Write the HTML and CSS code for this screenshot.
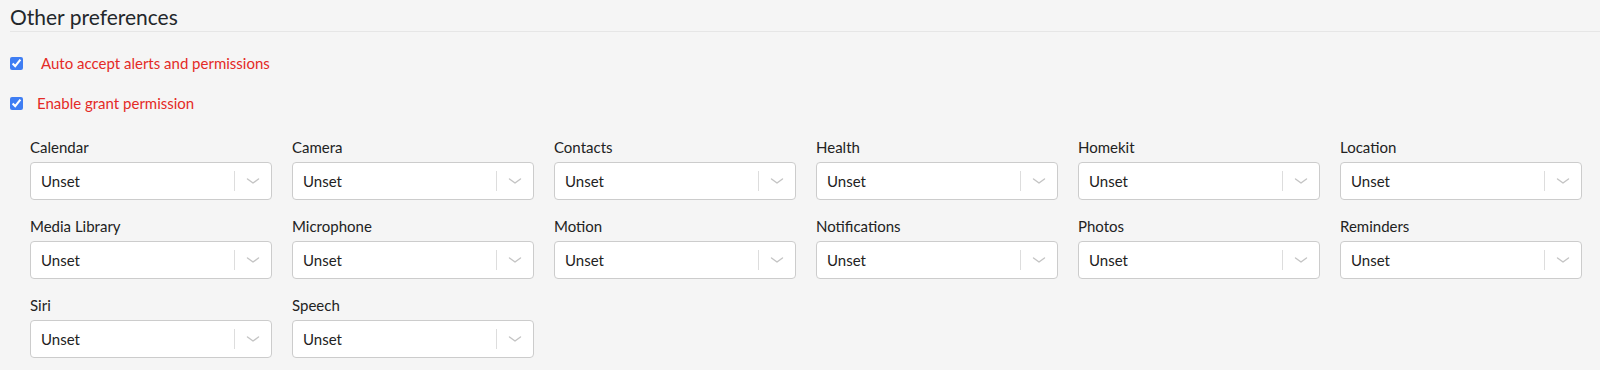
FILE: index.html
```html
<!DOCTYPE html>
<html>
<head>
    <title>Other preferences</title>
    <link rel="stylesheet" href="styles.css">
</head>
<body>
    <div class="container">
        <h2 class="section-title">Other preferences</h2>

        <div class="check-row">
            <input type="checkbox" id="autoAccept" checked>
            <label for="autoAccept" class="check-label check-label-wide">Auto accept alerts and permissions</label>
        </div>
        <div class="check-row">
            <input type="checkbox" id="grantPermission" checked>
            <label for="grantPermission" class="check-label">Enable grant permission</label>
        </div>

        <div id="permissions" class="permissions-grid"></div>
    </div>

    <script>
        const permissions = [
            'Calendar', 'Camera', 'Contacts', 'Health', 'Homekit', 'Location',
            'Media Library', 'Microphone', 'Motion', 'Notifications', 'Photos', 'Reminders',
            'Siri', 'Speech'
        ];

        document.getElementById('permissions').innerHTML = permissions.map(name => `
            <div class="field">
                <div class="field-label">${name}</div>
                <div class="select">
                    <div class="select-value">Unset</div>
                    <span class="select-separator"></span>
                    <div class="select-indicator">
                        <svg width="20" height="20" viewBox="0 0 20 20">
                            <polyline points="4.5,8 10,12 15.5,8" fill="none" stroke="#c4c4c4" stroke-width="1.4" stroke-linecap="round" stroke-linejoin="round"/>
                        </svg>
                    </div>
                </div>
            </div>
        `).join('');
    </script>
</body>
</html>
```

FILE: styles.css
```css
body {
    font-family: 'Lato', 'Open Sans', sans-serif;
    margin: 0;
    padding: 0;
    background-color: #f5f5f5;
    color: #333;
}
.container {
    padding-left: 10px;
}
.section-title {
    font-size: 21px;
    font-weight: 400;
    line-height: 24px;
    margin: 0;
    padding: 5px 0 2px;
    color: #23272b;
    border-bottom: 1px solid #e6e6e6;
}
.check-row {
    display: flex;
    align-items: center;
    height: 20px;
    margin-top: 20px;
}
.check-row:first-of-type {
    margin-top: 21px;
}
.check-row input {
    width: 13px;
    height: 13px;
    margin: 0;
    accent-color: #3f7ef3;
}
.check-label {
    margin-left: 14px;
    font-size: 15px;
    color: #e42a26;
}
.check-label-wide {
    margin-left: 18px;
}
.permissions-grid {
    display: grid;
    grid-template-columns: repeat(6, 242px);
    column-gap: 20px;
    row-gap: 16px;
    margin-top: 24px;
    padding-left: 20px;
}
.field-label {
    font-size: 15px;
    line-height: 20px;
    margin-bottom: 5px;
    color: #222;
}
.select {
    display: flex;
    align-items: center;
    height: 38px;
    box-sizing: border-box;
    background-color: white;
    border: 1px solid #cccccc;
    border-radius: 4px;
}
.select-value {
    flex: 1;
    padding: 0 10px;
    font-size: 15px;
    color: #222;
}
.select-separator {
    align-self: stretch;
    width: 1px;
    margin: 8px 0;
    background-color: #dddddd;
}
.select-indicator {
    display: flex;
    padding: 8px;
}
```
